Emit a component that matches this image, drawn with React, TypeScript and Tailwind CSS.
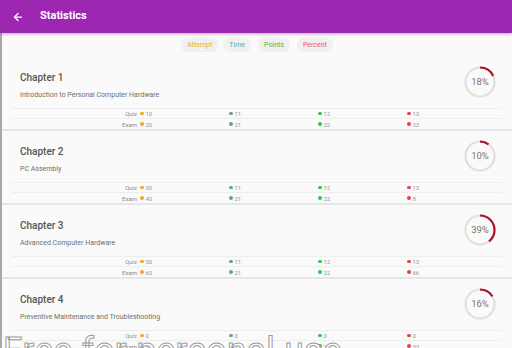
import { ArrowLeft } from "lucide-react";

type Row = [number, number, number, number];

const chapters: { title: string; sub: string; pct: number; quiz: Row; exam: Row }[] = [
  { title: "Chapter 1", sub: "Introduction to Personal Computer Hardware", pct: 18, quiz: [10, 11, 12, 13], exam: [20, 21, 22, 23] },
  { title: "Chapter 2", sub: "PC Assembly", pct: 10, quiz: [30, 11, 12, 13], exam: [40, 21, 22, 8] },
  { title: "Chapter 3", sub: "Advanced Computer Hardware", pct: 39, quiz: [50, 11, 12, 13], exam: [60, 21, 22, 66] },
  { title: "Chapter 4", sub: "Preventive Maintenance and Troubleshooting", pct: 16, quiz: [0, 0, 0, 0], exam: [5, 21, 22, 33] },
];

const dots = ["bg-[#f0a52a]", "bg-[#5aa88c]", "bg-[#2bc94a]", "bg-[#e8404a]"];

function Ring({ pct }: { pct: number }) {
  const r = 14.5;
  const c = 2 * Math.PI * r;
  return (
    <div className="relative w-[32px] h-[32px]">
      <svg width="32" height="32" viewBox="0 0 32 32">
        <circle cx="16" cy="16" r={r} fill="none" stroke="#e0e0e0" strokeWidth="2.2" />
        <circle
          cx="16"
          cy="16"
          r={r}
          fill="none"
          stroke="#b3112a"
          strokeWidth="2.2"
          strokeDasharray={`${(c * pct) / 100} ${c}`}
          transform="rotate(-90 16 16)"
        />
      </svg>
      <div className="absolute inset-0 flex items-center justify-center text-[9.5px] text-[#777]">{pct}%</div>
    </div>
  );
}

function StatRow({ label, vals, last }: { label: string; vals: Row; last?: boolean }) {
  return (
    <div className={`flex items-center text-[6px] text-[#999] h-[10px] ${last ? "" : "border-b border-[#eeeeee]"}`}>
      <div className="w-[128px] text-right pr-[3px] text-[#8a8a8a]">{label}</div>
      {vals.map((v, i) => (
        <div key={i} className="w-[89px] flex items-center gap-[2px]">
          <span className={`w-[3.5px] h-[3.5px] rounded-full ${dots[i]}`} />
          <span>{v}</span>
        </div>
      ))}
    </div>
  );
}

export default function App() {
  return (
    <div className="relative w-[512px] h-[348px] overflow-hidden bg-[#fafafa] font-['Roboto',sans-serif]">
      <div className="h-[33px] bg-[#9c27b0] flex items-center shadow-[0_1px_3px_rgba(0,0,0,0.3)] relative z-10">
        <ArrowLeft className="ml-[12px] text-white" size={12} strokeWidth={2.5} />
        <span className="ml-[16px] text-white text-[11px] font-bold">Statistics</span>
      </div>

      <div className="border-l-2 border-[#a8a8a8] h-[315px]">
        <div className="h-[24px] flex items-center justify-center gap-[5px] text-[7px]">
          <span className="px-[6px] h-[14px] flex items-center rounded-full bg-[#f0f0f0] text-[#f3a83a]">Attempt</span>
          <span className="px-[6px] h-[14px] flex items-center rounded-full bg-[#f0f0f0] text-[#6aa898]">Time</span>
          <span className="ml-[2px] px-[6px] h-[14px] flex items-center rounded-full bg-[#f0f0f0] text-[#33c452]">Points</span>
          <span className="ml-[2px] px-[6px] h-[14px] flex items-center rounded-full bg-[#f0f0f0] text-[#f05a5a]">Percent</span>
        </div>

        {chapters.map((ch) => (
          <div key={ch.title} className="border-b-2 border-[#e6e6e6]">
            <div className="flex h-[51px] pl-[18px] pr-[16px]">
              <div className="flex-1 pt-[14px]">
                <div className="leading-[14px] text-[10px] font-medium text-[#555]">{ch.title}</div>
                <div className="mt-[3px] leading-[14px] text-[7px] text-[#6f6f6f]">{ch.sub}</div>
              </div>
              <div className="pt-[9px]">
                <Ring pct={ch.pct} />
              </div>
            </div>
            <div className="ml-[10px] mr-[10px] border-t border-[#eeeeee]">
              <StatRow label="Quiz" vals={ch.quiz} />
              <StatRow label="Exam" vals={ch.exam} last />
            </div>
          </div>
        ))}
      </div>

      <div className="absolute left-[3px] top-[333px] text-[35px] leading-none tracking-[0.5px] text-white [-webkit-text-stroke:1px_#9a9a9a] pointer-events-none whitespace-nowrap">
        Free for personal use
      </div>
    </div>
  );
}
